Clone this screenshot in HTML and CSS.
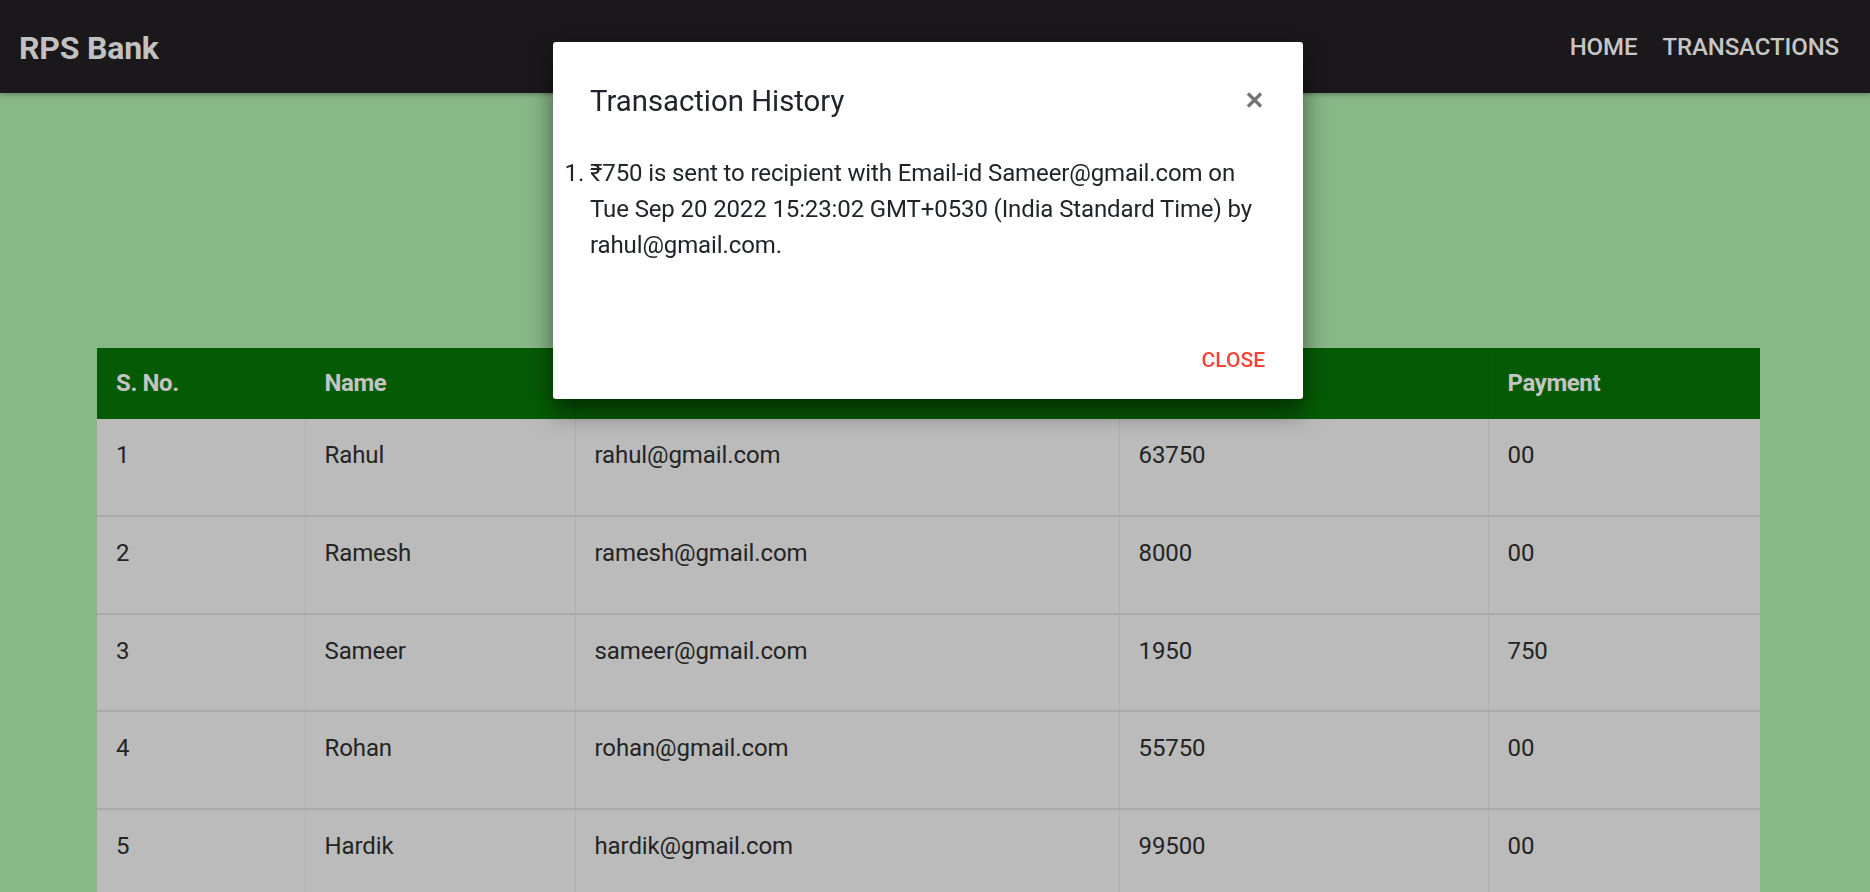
FILE: index.html
```html
<!DOCTYPE html>
<html lang="en">
<head>
<meta charset="utf-8">
<title>RPS Bank</title>
<link rel="stylesheet" href="styles.css">
</head>
<body>
<nav class="navbar">
  <a class="brand" href="#">RPS Bank</a>
  <ul class="nav-links">
    <li><a href="#">HOME</a></li>
    <li><a href="#">TRANSACTIONS</a></li>
  </ul>
</nav>
<main class="content">
  <table class="customers">
    <colgroup>
      <col class="c-sno"><col class="c-name"><col class="c-email"><col class="c-balance"><col class="c-payment">
    </colgroup>
    <thead>
      <tr><th>S. No.</th><th>Name</th><th>E-mail</th><th>Balance</th><th>Payment</th></tr>
    </thead>
    <tbody>
      <tr><td>1</td><td>Rahul</td><td>rahul@gmail.com</td><td>63750</td><td>00</td></tr>
      <tr><td>2</td><td>Ramesh</td><td>ramesh@gmail.com</td><td>8000</td><td>00</td></tr>
      <tr><td>3</td><td>Sameer</td><td>sameer@gmail.com</td><td>1950</td><td>750</td></tr>
      <tr><td>4</td><td>Rohan</td><td>rohan@gmail.com</td><td>55750</td><td>00</td></tr>
      <tr><td>5</td><td>Hardik</td><td>hardik@gmail.com</td><td>99500</td><td>00</td></tr>
    </tbody>
  </table>
</main>
<div class="modal" role="dialog">
  <div class="modal-content">
    <div class="modal-header">
      <h5 class="modal-title">Transaction History</h5>
      <button class="close-btn" aria-label="Close">
        <svg width="17" height="16" viewBox="0 0 17 16"><path d="M2 1.5 L15 14.5 M15 1.5 L2 14.5" stroke="currentColor" stroke-width="3.2" fill="none"/></svg>
      </button>
    </div>
    <div class="modal-body">
      <ol class="history">
        <li>₹750 is sent to recipient with Email-id Sameer@gmail.com on Tue Sep 20 2022 15:23:02 GMT+0530 (India Standard Time) by rahul@gmail.com.</li>
      </ol>
    </div>
    <div class="modal-footer">
      <button class="btn-flat">CLOSE</button>
    </div>
  </div>
</div>
</body>
</html>
```

FILE: styles.css
```css
* { box-sizing: border-box; }

html, body {
  margin: 0;
  padding: 0;
}

body {
  background: #88b788;
  font-family: Roboto, "Open Sans", "Liberation Sans", sans-serif;
  color: #222;
  min-height: 892px;
}

.navbar {
  height: 93px;
  background: #1a181b;
  display: flex;
  align-items: center;
  justify-content: space-between;
  padding: 0 31px 0 19px;
  box-shadow: 0 2px 4px rgba(0, 0, 0, 0.25);
}

.brand {
  color: #c1c1c1;
  font-size: 32px;
  font-weight: 700;
  letter-spacing: -0.2px;
  text-decoration: none;
  line-height: 40px;
  margin-top: 2px;
}

.nav-links {
  list-style: none;
  margin: 0;
  padding: 0;
  display: flex;
  gap: 25px;
}

.nav-links a {
  color: #c6c6c6;
  text-decoration: none;
  font-size: 24px;
  font-weight: 500;
  letter-spacing: -0.1px;
  line-height: 36px;
}

.content {
  padding: 255px 0 0 97px;
}

.customers {
  width: 1663px;
  border-collapse: collapse;
  table-layout: fixed;
  font-size: 24px;
  line-height: 36px;
}

.c-sno { width: 208px; }
.c-name { width: 270px; }
.c-email { width: 544px; }
.c-balance { width: 369px; }
.c-payment { width: 272px; }

.customers th {
  background: #055b05;
  color: #c4c4c4;
  font-weight: 700;
  letter-spacing: -0.4px;
  text-align: left;
  padding: 17px 18px 18px 19px;
  border-left: 1px solid #07530a;
}

.customers td {
  background: #bbbbbb;
  color: #242424;
  letter-spacing: -0.1px;
  padding: 18px 18px 41.8px 19px;
  border-left: 1px solid #b0b0b0;
  border-bottom: 2px solid #aaaaaa;
}

.customers th:first-child,
.customers td:first-child {
  border-left: none;
}

.modal {
  position: fixed;
  top: 42px;
  left: 553px;
  width: 750px;
  height: 357px;
}

.modal-content {
  height: 100%;
  background: #fff;
  border-radius: 3px;
  box-shadow: 0 12px 24px rgba(0, 0, 0, 0.5);
  display: flex;
  flex-direction: column;
}

.modal-header {
  display: flex;
  justify-content: space-between;
  align-items: flex-start;
  padding: 37px 40px 0 37px;
}

.modal-title {
  margin: 0;
  font-size: 29.3px;
  font-weight: 400;
  line-height: 44px;
  color: #212529;
}

.close-btn {
  border: 0;
  background: none;
  padding: 0;
  margin-top: 13px;
  color: #737373;
  display: flex;
  cursor: pointer;
}

.modal-body {
  padding: 32px 37px 0 12px;
  font-size: 24px;
  letter-spacing: -0.12px;
  line-height: 36px;
  color: #212529;
}

.history {
  margin: 0;
  padding-left: 25px;
}

.modal-footer {
  margin-top: auto;
  display: flex;
  justify-content: flex-end;
  padding: 0 38px 23px;
}

.btn-flat {
  border: 0;
  background: none;
  padding: 0;
  font-family: inherit;
  font-size: 21px;
  line-height: 32px;
  color: #f44336;
  font-weight: 500;
  cursor: pointer;
}
```
